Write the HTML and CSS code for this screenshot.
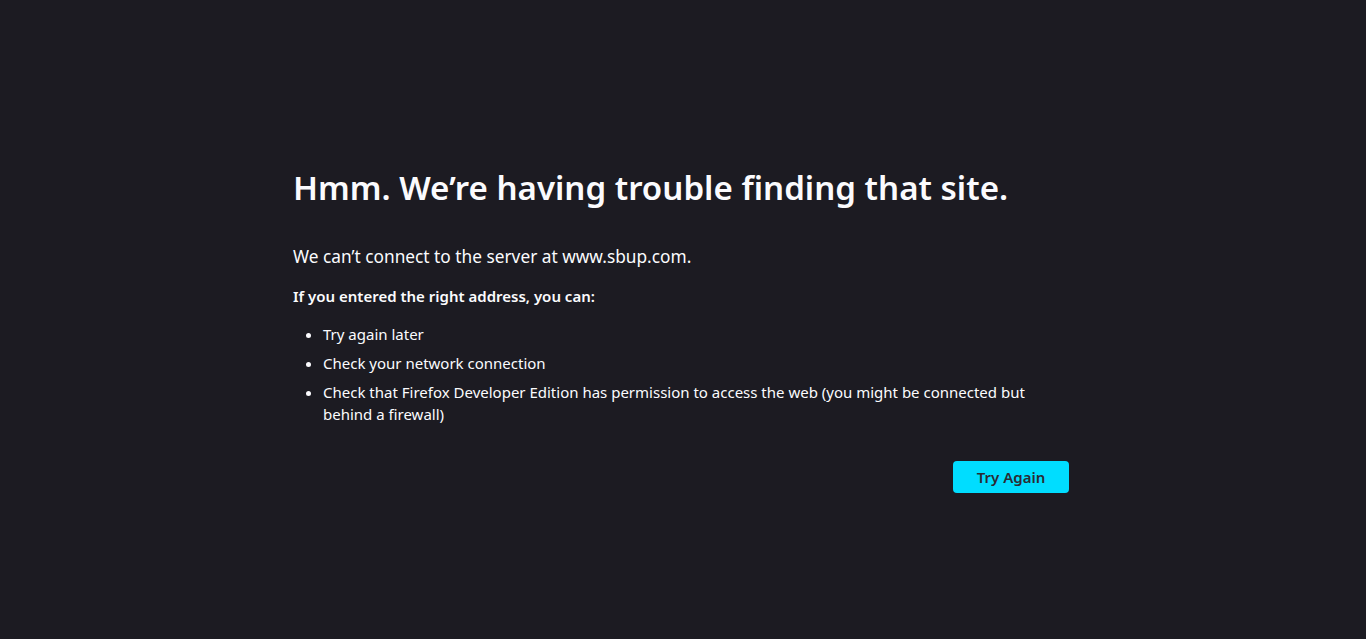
FILE: index.html
```html
<!DOCTYPE html>
<html lang="en">
<head>
  <meta charset="UTF-8">
  <title>Server Not Found</title>
  <link rel="stylesheet" href="styles.css">
</head>
<body>
<div class="container">
  <h1 class="title-text">Hmm. We’re having trouble finding that site.</h1>
  <p class="intro">We can’t connect to the server at www.sbup.com.</p>
  <p class="advice"><strong>If you entered the right address, you can:</strong></p>
  <ul class="tips">
    <li>Try again later</li>
    <li>Check your network connection</li>
    <li>Check that Firefox Developer Edition has permission to access the web (you might be connected but behind a firewall)</li>
  </ul>
  <div class="button-container">
    <button class="primary" type="button">Try Again</button>
  </div>
</div>
</body>
</html>
```

FILE: styles.css
```css
* {
  box-sizing: border-box;
}

html, body {
  margin: 0;
  height: 100%;
}

body {
  background: #1c1b22;
  color: #fbfbfe;
  font-family: 'Noto Sans', sans-serif;
  font-size: 15px;
  display: flex;
  justify-content: center;
  padding-top: 165px;
}

.container {
  width: 780px;
}

.title-text {
  font-size: 33.1px;
  font-weight: 600;
  line-height: 46px;
  margin: 0 0 33px;
}

.intro {
  font-size: 17.3px;
  line-height: 26px;
  margin: 0 0 15px;
}

.advice {
  margin: 0 0 16px;
  line-height: 22px;
}

.advice strong {
  font-weight: 600;
}

.tips {
  margin: 0;
  padding-left: 30px;
}

.tips li {
  line-height: 22px;
  margin-bottom: 7px;
}

.button-container {
  display: flex;
  justify-content: flex-end;
  margin-top: 36px;
}

.primary {
  width: 116px;
  height: 32px;
  margin-right: 4px;
  border: none;
  border-radius: 4px;
  background: #00ddff;
  color: #2b2a33;
  font-family: 'Noto Sans', sans-serif;
  font-size: 15px;
  font-weight: 600;
}
```
